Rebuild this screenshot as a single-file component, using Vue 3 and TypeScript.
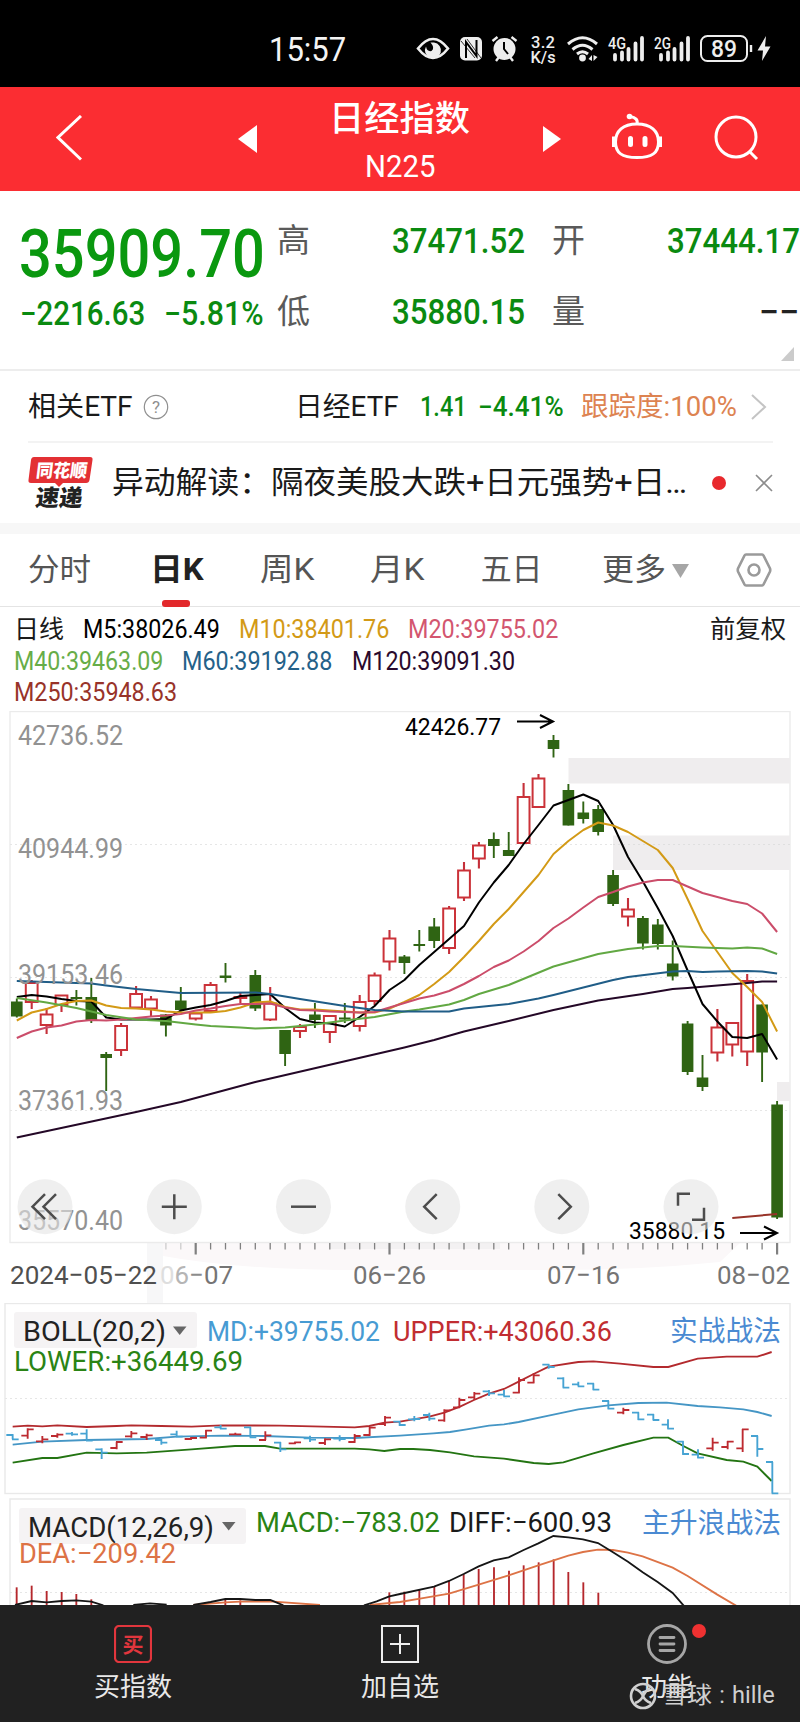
<script setup lang="ts">
import type { Directive } from 'vue'

// Condenses or widens a run of text so that it takes the given width.
const vFit: Directive<HTMLElement, number> = {
  mounted(el, binding) {
    const natural = el.offsetWidth
    if (!natural) return
    el.style.transform = `scaleX(${binding.value / natural})`
    el.style.marginRight = `${binding.value - natural}px`
  },
}

interface Legend { text: string; width: number; tone: string }
const maRows: Legend[][] = [
  [
    { text: '日线', width: 50, tone: 'ink' },
    { text: 'M5:38026.49', width: 137, tone: 'm5' },
    { text: 'M10:38401.76', width: 150, tone: 'm10' },
    { text: 'M20:39755.02', width: 150, tone: 'm20' },
  ],
  [
    { text: 'M40:39463.09', width: 149, tone: 'm40' },
    { text: 'M60:39192.88', width: 150, tone: 'm60' },
    { text: 'M120:39091.30', width: 163, tone: 'm120' },
  ],
  [{ text: 'M250:35948.63', width: 163, tone: 'm250' }],
]

const STEP = 14.907
const cx = (i: number) => +(16.8 + i * STEP).toFixed(1)

// direction, body top, body bottom, high, low
type Candle = [string, number, number, number, number]
const candles: Candle[] = [
  ['g', 1001.5, 1016.5, 998.5, 1017.5], ['r', 983, 1002, 980, 1009], ['r', 1014.5, 1025, 1008, 1034],
  ['r', 995.5, 1005, 995.5, 1012], ['g', 997, 999, 990, 1005.5], ['g', 997, 1020, 978, 1023],
  ['g', 1054, 1058, 1052, 1091], ['r', 1026, 1050, 1023, 1056], ['r', 994, 1007.5, 986, 1007.5],
  ['r', 999.5, 1008.5, 996, 1016], ['g', 1014.5, 1025.5, 1014, 1036.5], ['g', 1000.5, 1010, 987, 1011.5],
  ['r', 1013.5, 1018.5, 1013, 1020.5], ['r', 985, 1011, 982, 1011], ['g', 975.5, 978, 963, 982.5],
  ['r', 997, 998, 992, 1003], ['g', 975, 1008.5, 970, 1011], ['r', 1003.5, 1019.5, 987, 1021],
  ['g', 1030, 1054, 1030, 1066], ['r', 1027, 1031, 1024, 1038], ['g', 1014.5, 1020, 1003, 1028],
  ['r', 1016, 1032, 1016, 1043], ['g', 1017.5, 1019.5, 1003, 1023], ['r', 1002, 1026, 995, 1031.5],
  ['r', 975.5, 1001, 972.5, 1005], ['r', 938.5, 961.5, 930, 970.5], ['g', 956.5, 963, 955, 974],
  ['g', 944, 946, 930, 951.5], ['g', 926.5, 941, 918, 948], ['r', 908.5, 948, 906, 954],
  ['r', 870.5, 897.5, 862, 901], ['r', 845.5, 858.5, 842, 868.5], ['g', 839, 846, 832.5, 858],
  ['g', 850, 856, 832, 856], ['r', 797, 843, 783, 843], ['r', 778.5, 807, 774, 808],
  ['g', 740, 749, 735, 757.5], ['g', 790, 825.5, 784, 825.5], ['g', 812.5, 819, 801.5, 823.5],
  ['g', 809, 832, 805, 835.5], ['g', 875, 904, 870, 906], ['r', 909.5, 916.5, 898, 926.5],
  ['g', 918, 943.5, 916, 949.5], ['g', 924.5, 944, 919, 949.5], ['g', 963.5, 976.5, 940.5, 980.5],
  ['g', 1023.5, 1072, 1021, 1075], ['g', 1077.5, 1087, 1055, 1091], ['r', 1027.5, 1052.5, 1009, 1061.5],
  ['r', 1023, 1044.5, 1023, 1056.5], ['r', 981, 1051.5, 974, 1066], ['g', 1004.5, 1052.5, 1004.5, 1082],
  ['g', 1104.5, 1217.5, 1101, 1219],
]

const dense = (ys: number[]) => ys.map((y, i) => `${cx(i)},${y}`).join(' ')
const sparse = (pts: number[][]) => pts.map(([i, y]) => `${cx(i)},${y}`).join(' ')

const averages = [
  { tone: 'm120', points: sparse([[0, 1137.5], [8, 1112], [11, 1102], [16, 1082], [26, 1047.5], [28, 1040], [30, 1031.5], [33, 1021], [36, 1010], [39, 1000.5], [42, 994], [44, 989], [45, 988], [49, 983], [50, 981.5], [51, 981.5]]) },
  { tone: 'm5', points: dense([997, 995, 996.5, 999, 1001, 1001.5, 1017.5, 1019.5, 1019.5, 1019.5, 1019, 1010.5, 1007.5, 1005, 1001, 996, 995, 994, 1008, 1019, 1022.5, 1023.5, 1026.5, 1017, 1006, 990, 980, 965, 952, 939, 926, 902.5, 882.5, 865, 844, 825, 805.5, 800, 794.5, 801, 825, 857, 881.5, 908, 936, 970.5, 1004, 1021.5, 1037, 1038, 1034, 1059.5]) },
  { tone: 'm10', points: dense([1020.5, 1012.5, 1009, 1004, 1001, 1000.5, 1005.5, 1008, 1008.5, 1009.5, 1011.5, 1012.5, 1012.5, 1012.5, 1011, 1007.5, 1002.5, 1001.5, 1007, 1009.5, 1009.5, 1010.5, 1011.5, 1012.5, 1012.5, 1008.5, 1002, 995, 984, 972, 957, 941, 924, 909, 892, 875, 854, 841, 830, 822.5, 825.5, 832, 841, 850, 868, 899, 931, 952, 973, 987, 1002, 1031.5]) },
  { tone: 'm20', points: dense([1038, 1031.5, 1027.5, 1025.5, 1021.5, 1020, 1020.5, 1019.5, 1018, 1016.5, 1015.5, 1014, 1010.5, 1008.5, 1006, 1004, 1004, 1003.5, 1007.5, 1010, 1010.5, 1011.5, 1012, 1012.5, 1012, 1007.5, 1003, 998.5, 995.5, 991, 984, 976, 967, 960.5, 951.5, 941, 928, 918.5, 907.5, 897, 892, 886.5, 882.5, 880, 880, 886.5, 893, 897, 901, 904, 913.5, 932]) },
  { tone: 'm40', points: sparse([[0, 998], [2, 1002.5], [4, 1008], [6, 1015], [8, 1019.5], [10, 1021], [12, 1024.5], [13, 1026], [15, 1027.5], [16, 1028.5], [18, 1027.5], [20, 1024.5], [22, 1020.5], [24, 1017], [26, 1011.5], [27, 1009.5], [29, 1004.5], [30, 1000], [31, 994], [33, 985], [36, 966.5], [39, 954], [41, 949], [42, 947.5], [43, 946], [44, 946], [46, 947.5], [48, 948.5], [49, 947.5], [50, 948.5], [51, 954]]) },
  { tone: 'm60', points: sparse([[0, 981], [5, 983.5], [6, 985.5], [8, 989], [11, 993], [16, 992.5], [17, 994], [19, 999], [22, 1006], [24, 1010], [26, 1011.5], [29, 1011.5], [30, 1008.5], [33, 1004], [35, 998.5], [36, 995], [38, 987.5], [40, 980], [41, 977], [44, 971.5], [45, 971], [46, 972], [47, 971.5], [49, 971], [50, 971.5], [51, 973.5]]) },
  { tone: 'm250', points: sparse([[48, 1218], [51, 1214]]) },
]

const priceLabels = [
  { y: 745, text: '42736.52' },
  { y: 858, text: '40944.99' },
  { y: 984, text: '39153.46' },
  { y: 1110, text: '37361.93' },
  { y: 1230, text: '35570.40' },
]
const ticks = Array.from({ length: 42 }, (_, k) => k + 10).map((i) => ({
  x: cx(i),
  major: [12, 25, 38, 51].includes(i),
  faint: i < 12,
}))
const controls = [
  { x: 45, d: 'M0 -12.5L-12.5 0L0 12.5M11 -12.5L-1.5 0L11 12.5' },
  { x: 174.3, d: 'M-12.5 0H12.5M0 -12.5V12.5' },
  { x: 303.5, d: 'M-12.5 0H12.5' },
  { x: 432.7, d: 'M4 -12.5L-8.5 0L4 12.5' },
  { x: 561.8, d: 'M-3.5 -12.5L9 0L-3.5 12.5' },
  { x: 691, d: 'M-13 -1V-13H-1M13 1V13H1' },
]

// direction, x, high, low, open, close in thirds of a pixel
type Bar = [string, number, number, number, number, number]
const bollBars: Bar[] = [
  ['b', 38, 433, 448, 435, 448], ['r', 83, 415, 446, 437, 418], ['r', 127, 438, 460, 454, 448],
  ['r', 172, 430, 443, 438, 434], ['b', 216, 426, 437, 431, 433], ['b', 260, 418, 452, 431, 452],
  ['b', 305, 475, 507, 478, 488], ['r', 350, 455, 478, 474, 456], ['r', 394, 423, 443, 439, 430],
  ['r', 440, 431, 450, 441, 436], ['b', 484, 446, 464, 450, 458], ['b', 530, 422, 442, 433, 440],
  ['r', 573, 442, 450, 447, 444], ['r', 618, 420, 445, 443, 422], ['b', 662, 405, 418, 412, 416],
  ['r', 706, 428, 436, 433, 433], ['b', 751, 411, 442, 412, 442], ['r', 796, 424, 450, 450, 436],
  ['b', 841, 456, 486, 458, 478], ['r', 885, 455, 462, 460, 457], ['b', 930, 437, 456, 445, 449],
  ['r', 975, 445, 465, 459, 448], ['b', 1019, 436, 454, 446, 447], ['r', 1064, 432, 458, 456, 438],
  ['r', 1109, 410, 437, 435, 413], ['r', 1155, 378, 408, 402, 383], ['b', 1199, 392, 408, 395, 405],
  ['b', 1243, 378, 394, 388, 387], ['b', 1288, 368, 392, 375, 386], ['r', 1333, 358, 395, 391, 361],
  ['r', 1378, 323, 353, 352, 330], ['r', 1423, 306, 330, 322, 311], ['b', 1467, 300, 318, 304, 310],
  ['b', 1512, 300, 318, 314, 319], ['r', 1557, 262, 310, 308, 270], ['r', 1601, 250, 280, 278, 256],
  ['b', 1646, 222, 236, 224, 231], ['b', 1690, 262, 293, 265, 293], ['b', 1735, 275, 288, 283, 289],
  ['b', 1780, 280, 300, 281, 299], ['b', 1825, 332, 358, 333, 356], ['r', 1870, 353, 373, 368, 360],
  ['b', 1915, 367, 390, 368, 388], ['b', 1960, 372, 390, 374, 390], ['b', 2004, 388, 416, 404, 416],
  ['b', 2049, 453, 494, 455, 492], ['b', 2094, 478, 505, 494, 503], ['r', 2138, 443, 482, 475, 458],
  ['r', 2183, 453, 478, 471, 455], ['r', 2228, 417, 486, 475, 418], ['b', 2272, 437, 500, 438, 477],
  ['b', 2317, 516, 610, 516, 610],
]
const barPath = ([, x, hi, lo, o, c]: Bar) => `M${x} ${hi}V${lo}M${x - 19} ${o}H${x + 2}M${x - 2} ${c}H${x + 18}`

const macdBars = [
  [50, 892], [95, 887], [140, 903], [185, 906], [229, 912], [274, 928], [676, 930], [721, 931],
  [1168, 907], [1213, 905], [1258, 898], [1303, 890], [1347, 873], [1391, 853], [1436, 837], [1482, 832],
  [1527, 842], [1571, 826], [1616, 817], [1661, 808], [1705, 846], [1750, 877], [1795, 908],
]

const tabs = [
  { text: '分时', width: 63, on: false },
  { text: '日K', width: 54, on: true },
  { text: '周K', width: 54, on: false },
  { text: '月K', width: 54, on: false },
  { text: '五日', width: 62, on: false },
]
</script>

<template>
  <div class="screen">
    <header class="status">
      <span v-fit="77" class="clock">15:57</span>
      <svg class="status-icons" width="380" height="40" viewBox="405 30 380 40">
        <path d="M418 48.500Q433 29.500 448 48.500Q433 67.500 418 48.500Z" fill="none" stroke="#eee" stroke-width="2.600" />
        <path d="M434 42.500A8 8 0 1 1 426 46.500Q427 52 431.500 51Q435.500 48 430.500 42.500Z" fill="#eee" />
        <rect x="460" y="37" width="22" height="23.500" rx="5" fill="#eee" />
        <path d="M466 58V42L476.500 56V40" fill="none" stroke="#000" stroke-width="2" />
        <path d="M467 39L481 58M461 41L475 58" stroke="#000" stroke-width=".8" />
        <circle cx="504.500" cy="49" r="11" fill="#eee" />
        <path d="M492.500 41l5-4M516.500 41l-5-4M496 61l3-4M513 61l-3-4" stroke="#eee" stroke-width="2.400" />
        <path d="M504 42v7l4 5" fill="none" stroke="#000" stroke-width="2" />
        <g fill="#eee" class="net">
          <text x="531" y="48" font-size="16.500" textLength="24">3.2</text>
          <text x="530.500" y="62.500" font-size="17" textLength="25" lengthAdjust="spacingAndGlyphs">K/s</text>
          <text x="608" y="48.500" font-size="16.500" textLength="18" lengthAdjust="spacingAndGlyphs">4G</text>
          <text x="654" y="48.500" font-size="16.500" textLength="17" lengthAdjust="spacingAndGlyphs">2G</text>
          <text x="711" y="57" font-size="23.500" textLength="26" lengthAdjust="spacingAndGlyphs">89</text>
        </g>
        <g fill="none" stroke="#eee" stroke-width="3">
          <path d="M568 44Q582.500 31.500 597 44" />
          <path d="M572.500 49.500Q582.500 41 592.500 49.500" />
          <path d="M577 54Q582.500 49.500 588 54" />
        </g>
        <circle cx="582.500" cy="58" r="3.400" fill="#eee" />
        <path d="M588.500 59l3.500-4v6zM593.500 55v6l4-4z" fill="#eee" />
        <path d="M615 55V59.500M622 52.500V59.500M628.500 49V59.500M635.500 43.500V59.500M642 38V59.500M661 55V59.500M668 52.500V59.500M674.500 49V59.500M681.500 43.500V59.500M688 38V59.500" stroke="#eee" stroke-width="3.800" stroke-linecap="round" />
        <rect x="701" y="36" width="46" height="25" rx="6.500" fill="none" stroke="#eee" stroke-width="2" />
        <path d="M751 45v7" stroke="#eee" stroke-width="2.400" />
        <path d="M766 36L757.500 50.500H763L762 61L770.500 46.500H765Z" fill="#eee" />
      </svg>
    </header>

    <nav class="titlebar">
      <svg width="26" height="46" viewBox="0 0 26 46" class="back"><path d="M25 1L2 22.500L25 44.500" fill="none" stroke="#fff" stroke-width="3" /></svg>
      <svg width="19" height="28" viewBox="0 0 19 28" class="prev"><path d="M19 0V28L0 14Z" fill="#fff" /></svg>
      <div class="title">
        <h1 v-fit="141">日经指数</h1>
        <p v-fit="70">N225</p>
      </div>
      <svg width="18" height="26" viewBox="0 0 18 26" class="next"><path d="M0 0V26L18 13Z" fill="#fff" /></svg>
      <svg width="52" height="48" viewBox="0 0 52 48" class="robot">
        <g fill="none" stroke="#fff" stroke-width="3">
          <path d="M26 11C12 11 4.500 18 4.500 29C4.500 40 11 44.500 26 44.500C41 44.500 47.500 40 47.500 29C47.500 18 40 11 26 11Z" />
          <path d="M26 11C27 7 25 4.500 19 3.500" />
          <path d="M2.500 23.500V34M49.500 23.500V34" />
          <path d="M19.500 25.500V31.500M34 25.500V31.500" stroke-width="5" stroke-linecap="round" />
        </g>
        <circle cx="18.500" cy="3.500" r="2.800" fill="#fff" />
      </svg>
      <svg width="48" height="48" viewBox="0 0 48 48" class="search"><g fill="none" stroke="#fff" stroke-width="3"><circle cx="23" cy="22" r="20" /><path d="M36 36L44 44" /></g></svg>
    </nav>

    <section class="quote">
      <div class="price"><span v-fit="246">35909.70</span></div>
      <div class="change"><span v-fit="125">−2216.63</span><span v-fit="100">−5.81%</span></div>
      <span class="label hi">高</span><span class="val hi-v"><span v-fit="133">37471.52</span></span>
      <span class="label op">开</span><span class="val op-v"><span v-fit="133">37444.17</span></span>
      <span class="label lo">低</span><span class="val lo-v"><span v-fit="133">35880.15</span></span>
      <span class="label vo">量</span><span class="val vo-v"><span v-fit="40" class="none">−−</span></span>
      <svg class="corner" width="13" height="14" viewBox="0 0 13 14"><path d="M13 0V14H0Z" fill="#cbcbcb" /></svg>
    </section>

    <section class="etf">
      <span v-fit="105" class="etf-title">相关ETF</span>
      <svg width="26" height="26" viewBox="0 0 26 26" class="help"><circle cx="13" cy="13" r="11.700" fill="none" stroke="#8f8f8f" stroke-width="1.200" /><text x="13" y="19" text-anchor="middle" font-size="17" fill="#8f8f8f">?</text></svg>
      <span v-fit="104" class="etf-name">日经ETF</span>
      <span v-fit="47" class="green">1.41</span>
      <span v-fit="86" class="green pct">−4.41%</span>
      <span v-fit="156" class="track">跟踪度:100%</span>
      <svg width="16" height="26" viewBox="0 0 16 26" class="more"><path d="M1 1L14 13L1 25" fill="none" stroke="#c4c4c4" stroke-width="2" /></svg>
    </section>

    <section class="news">
      <svg width="66" height="54" viewBox="0 0 66 54">
        <path d="M6 1H62Q65 1 64.500 4L61.500 24Q61 27 58 27H35L31 31L27 27H3Q0 27 .500 24L3 4Q3.500 1 6 1Z" fill="#e33034" />
        <g transform="skewX(-7)" class="badge">
          <text x="10" y="21" font-size="18" fill="#fff" textLength="51" lengthAdjust="spacingAndGlyphs">同花顺</text>
          <text x="13" y="50" font-size="23" fill="#222" textLength="47" lengthAdjust="spacingAndGlyphs">速递</text>
        </g>
      </svg>
      <span v-fit="159" class="headline lead">异动解读：</span>
      <span v-fit="416" class="headline">隔夜美股大跌+日元强势+日…</span>
      <i class="dot"></i>
      <svg width="18" height="18" viewBox="0 0 18 18" class="close"><path d="M1 1L17 17M17 1L1 17" stroke="#8c8c8c" stroke-width="1.600" /></svg>
    </section>

    <div class="gap"></div>

    <section class="tabs">
      <span v-for="t in tabs" :key="t.text" class="tab" :class="{ on: t.on }"><span v-fit="t.width">{{ t.text }}</span></span>
      <span class="tab"><span v-fit="64">更多</span></span>
      <svg width="17" height="14" viewBox="0 0 17 14" class="caret"><path d="M0 0H17L8.500 14Z" fill="#a6a6a6" /></svg>
      <svg width="36" height="34" viewBox="0 0 36 34" class="gear"><g fill="none" stroke="#9a9a9a" stroke-width="2.600"><path d="M10 1.500H26Q27 1.500 27.500 2.500L34 15.500Q34.500 17 34 18.500L27.500 31.500Q27 32.500 26 32.500H10Q9 32.500 8.500 31.500L2 18.500Q1.500 17 2 15.500L8.500 2.500Q9 1.500 10 1.500Z" /><circle cx="18" cy="17" r="5.500" /></g></svg>
    </section>

    <section class="legend">
      <div class="ma">
        <div v-for="(row, r) in maRows" :key="r" class="ma-row">
          <span v-for="m in row" :key="m.text" v-fit="m.width" :class="m.tone">{{ m.text }}</span>
        </div>
      </div>
      <span v-fit="76" class="adjust">前复权</span>
    </section>

    <svg class="chart" width="800" height="592" viewBox="0 711 800 592">
      <path d="M147 1243H163V1303H147Z" fill="#f7f7f8" />
      <path d="M163 1243H740L720 1262Q640 1270 560 1270H400Q250 1272 163 1256Z" fill="#fbf8f9" />
      <path d="M330 1243H500V1249H330Z" fill="#f3f1f2" />
      <rect x="10" y="711.500" width="780" height="531" fill="none" stroke="#ebebeb" stroke-width="1.400" />
      <path d="M10 844.500H790M10 977.500H790M10 1110.500H790" stroke="#e6e6e6" stroke-dasharray="2 3" />
      <path d="M568.500 758H790V783.500H568.500ZM613 835.500H790V870H613ZM777 1082H790V1101H777Z" fill="#efedee" />
      <path d="M613 844.500H790" stroke="#dfdfdf" stroke-dasharray="2 3" />
      <g v-for="(c, i) in candles" :key="i">
        <template v-if="c[0] === 'g'">
          <path :d="`M${cx(i)} ${c[3]}V${c[4]}`" stroke="#2f6413" stroke-width="1.900" />
          <rect :x="cx(i) - 5.800" :y="c[1]" width="11.600" :height="c[2] - c[1]" fill="#2f6413" />
        </template>
        <template v-else>
          <path :d="`M${cx(i)} ${c[3]}V${c[1]}M${cx(i)} ${c[2]}V${c[4]}`" stroke="#c5303a" stroke-width="2.100" />
          <rect :x="cx(i) - 5.900" :y="c[1]" width="11.800" :height="c[2] - c[1]" fill="#fff" stroke="#cb3239" stroke-width="2" />
        </template>
      </g>
      <polyline v-for="a in averages" :key="a.tone" :points="a.points" class="line" :class="a.tone" />
      <g class="price-label">
        <text v-for="p in priceLabels" :key="p.text" x="18" :y="p.y" textLength="105" lengthAdjust="spacingAndGlyphs">{{ p.text }}</text>
      </g>
      <g class="mark">
        <text x="405" y="735" textLength="96" lengthAdjust="spacingAndGlyphs">42426.77</text>
        <text x="629" y="1239" textLength="96" lengthAdjust="spacingAndGlyphs">35880.15</text>
        <path d="M517 721.500H553M540 715L553 721.500L540 728M740 1233H777M764 1226.500L777 1233L764 1239.500" fill="none" stroke="#000" stroke-width="2" />
      </g>
      <g v-for="b in controls" :key="b.x" :transform="`translate(${b.x} 1206.700)`">
        <circle r="27.500" fill="#e5e5e5" fill-opacity=".6" />
        <path :d="b.d" fill="none" stroke="#4d4d4d" stroke-width="2.500" />
      </g>
      <path v-for="t in ticks" :key="t.x" :d="`M${t.x} 1243V${t.major ? 1254.500 : 1249.500}`" :stroke="t.faint ? '#ccc' : '#808080'" :stroke-width="t.major ? 2.200 : 1.300" />
      <g class="date">
        <text x="10" y="1284" textLength="147" lengthAdjust="spacingAndGlyphs" fill="#4f4f4f">2024−05−22</text>
        <text x="160" y="1284" textLength="73" lengthAdjust="spacingAndGlyphs"><tspan fill="#dedede">0</tspan><tspan fill="#b5b5b5">6</tspan><tspan fill="#8c8c8c">−</tspan>07</text>
        <text x="353" y="1284" textLength="73" lengthAdjust="spacingAndGlyphs">06−26</text>
        <text x="547" y="1284" textLength="73" lengthAdjust="spacingAndGlyphs">07−16</text>
        <text x="717" y="1284" textLength="73" lengthAdjust="spacingAndGlyphs">08−02</text>
      </g>
    </svg>

    <svg class="chart" width="800" height="195" viewBox="0 1303 800 195">
      <rect x="5" y="1303.500" width="785" height="190" fill="none" stroke="#e9e9e9" stroke-width="1.400" />
      <path d="M5 1398.500H790" stroke="#e6e6e6" stroke-dasharray="2 3" />
      <g transform="translate(0 1290) scale(.33333)" fill="none" stroke-width="5.600">
        <polyline stroke="#b32a2e" points="38,410 83,407 127,409 172,406 260,411 350,408 394,406 484,408 575,410 664,406 840,407 970,410 1064,412 1108,408 1153,398 1200,395 1288,380 1333,368 1380,350 1422,330 1467,311 1512,297 1556,275 1601,252 1646,230 1735,216 1780,214 1860,221 1960,231 2005,231 2093,206 2180,200 2272,200 2315,186" />
        <polyline stroke="#4596c5" points="38,464 127,455 260,450 440,447 530,440 664,437 790,438 930,443 1064,444 1200,437 1300,430 1350,426 1400,418 1467,407 1512,403 1556,396 1646,377 1735,358 1825,346 1915,339 2000,338 2093,348 2160,352 2230,358 2272,366 2315,378" />
        <polyline stroke="#237412" points="38,518 127,504 172,504 260,488 350,490 440,488 575,478 705,468 795,468 840,476 1064,476 1108,478 1153,483 1200,477 1240,477 1290,480 1350,487 1422,499 1512,506 1601,519 1646,522 1690,517 1780,490 1870,465 1960,443 2005,443 2050,468 2093,490 2180,510 2230,515 2272,530 2315,573" />
        <path v-for="b in bollBars" :key="b[1]" :d="barPath(b)" :stroke="b[0] === 'r' ? '#bd2a30' : '#46a3d3'" />
      </g>
      <rect x="14" y="1312" width="183" height="36" rx="3" fill="#f5f3f4" />
      <path d="M173 1326.500H186.500L179.700 1335Z" fill="#666" />
      <g class="ind">
        <text x="23" y="1341" textLength="143" lengthAdjust="spacingAndGlyphs" fill="#222">BOLL(20,2)</text>
        <text x="207" y="1341" textLength="173" lengthAdjust="spacingAndGlyphs" fill="#479bd3">MD:+39755.02</text>
        <text x="393" y="1341" textLength="219" lengthAdjust="spacingAndGlyphs" fill="#c12d31">UPPER:+43060.36</text>
        <text x="670" y="1341" textLength="111" lengthAdjust="spacingAndGlyphs" fill="#4a8ad2">实战战法</text>
        <text x="14" y="1371" textLength="229" lengthAdjust="spacingAndGlyphs" fill="#2a8415">LOWER:+36449.69</text>
      </g>
    </svg>

    <svg class="chart" width="800" height="107" viewBox="0 1498 800 107">
      <path d="M10 1605V1499H790V1605" fill="none" stroke="#e9e9e9" stroke-width="1.400" />
      <path d="M10 1592.500H790" stroke="#e6e6e6" stroke-dasharray="2 3" />
      <g transform="translate(0 1290) scale(.33333)" fill="none" stroke-width="5.600">
        <path v-for="b in macdBars" :key="b[0]" :d="`M${b[0]} ${b[1]}V950`" stroke="#b5272c" />
        <path stroke="#dd7346" d="M580 945L676 937L721 935L811 934L960 945M1110 945L1200 936L1260 926L1347 911L1436 884L1526 856L1615 826L1705 797L1749 786L1794 779L1839 780L1884 788L1928 799L2018 833L2063 858L2152 914L2210 948" />
        <path stroke="#161616" d="M45 945L95 933L140 937L185 933L229 931L274 935L310 946M400 945L450 940L500 944M580 945L632 936L676 927L721 927L766 930L811 930L850 946M1092 946L1130 934L1168 919L1200 912L1302 890L1347 873L1391 852L1436 829L1481 811L1526 802L1571 780L1615 760L1660 738L1705 742L1749 748L1794 759L1839 787L1884 815L1928 847L1973 876L2018 909L2052 948" />
      </g>
      <rect x="19" y="1508" width="227" height="36" rx="3" fill="#f5f3f4" />
      <path d="M222 1522H235.500L228.700 1530.500Z" fill="#666" />
      <g class="ind">
        <text x="28" y="1537" textLength="186" lengthAdjust="spacingAndGlyphs" fill="#222">MACD(12,26,9)</text>
        <text x="256" y="1532" textLength="184" lengthAdjust="spacingAndGlyphs" fill="#2a8415">MACD:−783.02</text>
        <text x="449" y="1532" textLength="163" lengthAdjust="spacingAndGlyphs" fill="#1a1a1a">DIFF:−600.93</text>
        <text x="642" y="1533" textLength="139" lengthAdjust="spacingAndGlyphs" fill="#4a8ad2">主升浪战法</text>
        <text x="19" y="1562.500" textLength="157" lengthAdjust="spacingAndGlyphs" fill="#dd7346">DEA:−209.42</text>
      </g>
    </svg>

    <footer class="bottom">
      <div class="item">
        <svg width="38" height="38" viewBox="0 0 38 38"><rect x="1" y="1" width="36" height="36" rx="4" fill="none" stroke="#e2363d" stroke-width="2.200" /><text x="19" y="26.500" text-anchor="middle" font-size="21" font-weight="700" fill="#e2363d">买</text></svg>
        <span v-fit="78">买指数</span>
      </div>
      <div class="item">
        <svg width="38" height="38" viewBox="0 0 38 38"><rect x="1" y="1" width="36" height="36" fill="none" stroke="#eee" stroke-width="2" /><path d="M9 19H29M19 9V29" stroke="#eee" stroke-width="2" /></svg>
        <span v-fit="78">加自选</span>
      </div>
      <div class="item">
        <svg width="40" height="40" viewBox="0 0 40 40" class="menu"><circle cx="20" cy="20" r="18.500" fill="none" stroke="#a6a6a6" stroke-width="2.800" /><path d="M13 13.500H27M13 20H27M13 26.500H27" stroke="#a6a6a6" stroke-width="2.800" stroke-linecap="round" /></svg>
        <span v-fit="52">功能</span>
        <i class="badge-dot"></i>
      </div>
      <div class="watermark">
        <svg width="28" height="28" viewBox="0 0 28 28"><g fill="none" stroke="#d0d0d0" stroke-width="2.600"><circle cx="14" cy="14" r="12" /><path d="M6 7Q12 9 14 14T22 21M21 6Q16 9 14 14T6 21" /></g></svg>
        <span v-fit="50">雪球</span>
        <span class="colon">:</span>
        <span v-fit="43">hille</span>
      </div>
    </footer>
  </div>
</template>

<style>
body { margin: 0; background: #fff; }
</style>

<style scoped>
.screen { width: 800px; height: 1722px; overflow: hidden; background: #fff; font-family: Roboto, "Noto Sans CJK SC", sans-serif; color: #1a1a1a; display: flex; flex-direction: column; }
.screen > * { flex: none; box-sizing: border-box; }
.screen span, h1, p { display: inline-block; white-space: nowrap; transform-origin: 0 50%; }
svg { display: block; flex: none; }
h1, p { margin: 0; }

.status { height: 87px; background: #000; display: flex; align-items: flex-start; padding: 30px 0 0 269px; color: #f4f4f4; }
.clock { font-size: 33px; line-height: 40px; }
.status-icons { margin-left: 59px; }
.net { font-weight: 500; }

.titlebar { height: 104px; background: #fb2d32; color: #fff; display: flex; align-items: flex-start; padding-left: 56px; }
.back { margin-top: 28px; }
.prev { margin: 38px 0 0 156px; }
.title { width: 286px; display: flex; flex-direction: column; align-items: center; padding-top: 10px; }
h1 { font-size: 35px; line-height: 46px; font-weight: 500; }
p { font-size: 31px; line-height: 36px; margin-top: 6px; }
.next { margin-top: 39px; }
.robot { margin: 26px 0 0 50px; }
.search { margin: 28px 0 0 50px; }

.quote { height: 180px; border-bottom: 2px solid #ededed; display: grid; grid-template-columns: 257px 114px 161px 115px 153px; grid-template-rows: 50px 21px 71px; padding-top: 25px; position: relative; }
.price { grid-column: 1; grid-row: 1 / 3; padding-left: 19px; font-size: 66px; line-height: 77px; font-weight: 500; color: #0a980f; }
.change { grid-column: 1; grid-row: 3; padding-left: 20px; display: flex; gap: 19px; font-size: 32.500px; line-height: 54px; font-weight: 500; color: #0a8a10; }
.label { font-size: 33px; line-height: 50px; color: #5a5a5a; }
.val { font-size: 35px; line-height: 51px; color: #0a8a10; font-weight: 500; }
.hi, .lo { grid-column: 2; padding-left: 20px; }
.hi-v, .lo-v { grid-column: 3; padding-left: 21px; }
.op, .vo { grid-column: 4; padding-left: 20px; }
.op-v, .vo-v { grid-column: 5; padding-left: 20px; }
.hi, .hi-v, .op, .op-v { grid-row: 1; }
.lo, .lo-v, .vo, .vo-v { grid-row: 3; }
.vo-v { padding-left: 112px; }
.none { color: #222; }
.corner { position: absolute; right: 6px; bottom: 8px; }

.etf { height: 70px; display: flex; align-items: center; padding: 2px 0 0 28px; margin-right: 27px; font-size: 27px; line-height: 40px; }
.etf-name { margin-left: 126px; }
.help { margin-left: 10px; }
.green { color: #0a8a10; margin-left: 22px; font-weight: 500; }
.pct { margin-left: 11px; }
.track { color: #dd8351; margin-left: 18px; }
.more { margin-left: 14px; }

.news { height: 82px; display: flex; align-items: center; margin-left: 28px; border-top: 2px solid #f3f3f3; margin-right: 27px; }
.headline { font-size: 31px; line-height: 44px; }
.lead { margin-left: 18px; }
.dot { width: 14px; height: 14px; border-radius: 50%; background: #e8292d; margin-left: 25px; }
.close { margin-left: 29px; }
.badge { font-weight: 900; }
.gap { height: 11px; background: #f7f7f7; }

.tabs { height: 73px; display: flex; align-items: flex-start; padding: 14px 0 0 28px; border-bottom: 1px solid #e4e4e4; font-size: 31px; line-height: 44px; color: #555; }
.tab { position: relative; margin-right: 56px; }
.tab:nth-child(1) { margin-right: 59px; }
.tab:nth-child(5) { margin-right: 59px; }
.tab:nth-child(6) { margin-right: 6px; }
.on { color: #222; font-weight: 700; }
.on::after { content: ""; position: absolute; left: 12px; bottom: -15px; width: 28px; height: 7px; border-radius: 3px; background: #e2282b; }
.caret { margin-top: 16px; }
.gear { margin: 5px 0 0 47px; }

.legend { height: 104px; display: flex; justify-content: space-between; padding: 7px 14px 0 14px; font-size: 26px; }
.ma-row { display: flex; gap: 19px; line-height: 31.700px; height: 31.700px; }
.ink, .adjust { font-size: 25px; line-height: 31px; }
.m5 { color: #000; stroke: #000; }
.m10 { color: #d39a16; stroke: #d39a16; }
.m20 { color: #d3566f; stroke: #cb4d6a; }
.m40 { color: #67ad48; stroke: #62a843; }
.m60 { color: #246189; stroke: #205d87; }
.m120 { color: #2a0a2d; stroke: #240827; }
.m250 { color: #983329; stroke: #983329; }
.line { fill: none; stroke-width: 2; stroke-linejoin: round; }
.price-label { font-size: 28px; fill: #929292; }
.mark { font-size: 23px; fill: #000; }
.date { font-size: 26.500px; fill: #757575; }
.ind { font-size: 28px; }

.bottom { height: 117px; background: #212121; display: grid; grid-template-columns: 266px 268px 266px; position: relative; color: #e8e8e8; }
.item { display: flex; flex-direction: column; align-items: center; padding-top: 20px; position: relative; font-size: 26px; line-height: 40px; }
.item span { margin-top: 4px; }
.menu { margin: -1px 0; }
.badge-dot { position: absolute; left: 158px; top: 19px; width: 14px; height: 14px; border-radius: 50%; background: #ef3131; }
.watermark { position: absolute; left: 629px; top: 76px; display: flex; align-items: center; gap: 5px; font-size: 23px; line-height: 30px; color: #cfcfcf; }
.colon { width: 10px; text-align: center; }
</style>
